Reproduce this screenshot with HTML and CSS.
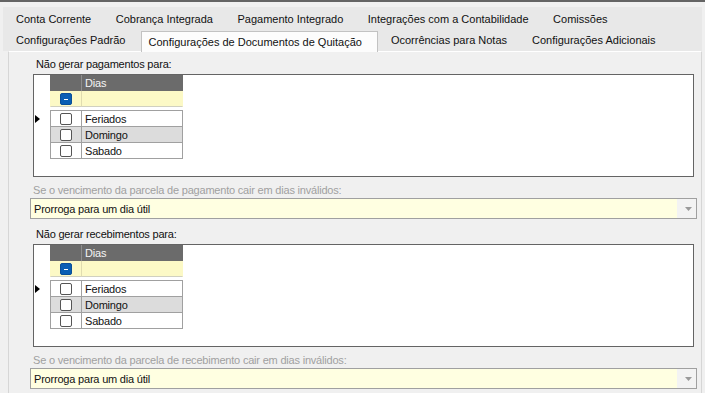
FILE: index.html
```html
<!DOCTYPE html>
<html lang="pt">
<head>
<meta charset="utf-8">
<link rel="stylesheet" href="styles.css">
</head>
<body>
<div class="window">
  <div class="tabs">
    <div class="tabrow r1">
      <span class="tab t-cc">Conta Corrente</span>
      <span class="tab">Cobrança Integrada</span>
      <span class="tab">Pagamento Integrado</span>
      <span class="tab">Integrações com a Contabilidade</span>
      <span class="tab">Comissões</span>
    </div>
    <div class="tabrow r2">
      <span class="tab t-cp">Configurações Padrão</span>
      <span class="tab sel">Configurações de Documentos de Quitação</span>
      <span class="tab t-oc">Ocorrências para Notas</span>
      <span class="tab t-ad">Configurações Adicionais</span>
    </div>
  </div>
  <div class="panel">
    <section class="sec s1">
      <div class="lbl">Não gerar pagamentos para:</div>
      <div class="grid">
        <div class="row head"><div class="ind"></div><div class="c1"></div><div class="c2">Dias</div></div>
        <div class="row filt"><div class="ind"></div><div class="c1"><span class="chk minus"></span></div><div class="c2"></div></div>
        <div class="rows">
          <div class="row"><div class="ind"><span class="arrow"></span></div><div class="c1"><span class="chk"></span></div><div class="c2">Feriados</div></div>
          <div class="row alt"><div class="ind"></div><div class="c1"><span class="chk"></span></div><div class="c2">Domingo</div></div>
          <div class="row"><div class="ind"></div><div class="c1"><span class="chk"></span></div><div class="c2">Sabado</div></div>
        </div>
      </div>
      <div class="lbl2">Se o vencimento da parcela de pagamento cair em dias inválidos:</div>
      <div class="combo"><div class="val">Prorroga para um dia útil</div><div class="btn"><svg width="7" height="4" viewBox="0 0 7 4"><path d="M0 0H7L3.5 4Z" fill="#9a9a9a"/></svg></div></div>
    </section>
    <section class="sec s2">
      <div class="lbl">Não gerar recebimentos para:</div>
      <div class="grid">
        <div class="row head"><div class="ind"></div><div class="c1"></div><div class="c2">Dias</div></div>
        <div class="row filt"><div class="ind"></div><div class="c1"><span class="chk minus"></span></div><div class="c2"></div></div>
        <div class="rows">
          <div class="row"><div class="ind"><span class="arrow"></span></div><div class="c1"><span class="chk"></span></div><div class="c2">Feriados</div></div>
          <div class="row alt"><div class="ind"></div><div class="c1"><span class="chk"></span></div><div class="c2">Domingo</div></div>
          <div class="row"><div class="ind"></div><div class="c1"><span class="chk"></span></div><div class="c2">Sabado</div></div>
        </div>
      </div>
      <div class="lbl2">Se o vencimento da parcela de recebimento cair em dias inválidos:</div>
      <div class="combo"><div class="val">Prorroga para um dia útil</div><div class="btn"><svg width="7" height="4" viewBox="0 0 7 4"><path d="M0 0H7L3.5 4Z" fill="#9a9a9a"/></svg></div></div>
    </section>
  </div>
</div>
</body>
</html>
```
FILE: styles.css
```css
* { box-sizing: border-box; }
html, body { margin: 0; padding: 0; }
body {
  width: 705px;
  height: 393px;
  overflow: hidden;
  background: #f0f0f0;
  font-family: "Liberation Sans", Arial, sans-serif;
  font-size: 11px;
  color: #111111;
}
.window {
  height: 393px;
  border-top: 2px solid #646464;
  display: flex;
  flex-direction: column;
}
.tabs {
  margin-top: 5px;
  margin-left: 3px;
  margin-right: 3px;
  background: #e8e8e8;
  display: flex;
  flex-direction: column;
}
.tabrow {
  display: flex;
  height: 22px;
  align-items: stretch;
}
.tab {
  display: flex;
  align-items: center;
  padding: 0 12.5px 0 12px;
  white-space: nowrap;
}
.r1 .tab { padding-top: 2px; }
.t-cc { margin-left: 1px; }
.t-cp { margin-left: 1px; padding-right: 12px; }
.tab.sel {
  margin-top: 2px;
  margin-bottom: -1px;
  padding: 0 15px 0 6px;
  margin-left: 4px;
  background: #fcfcfc;
  border: 1px solid #c2c2c2;
  border-bottom: none;
  position: relative;
  z-index: 1;
}
.t-oc { padding-left: 13px; padding-right: 11.5px; }
.t-ad { padding-left: 13.5px; }
.panel {
  flex: 1;
  margin-left: 8px;
  width: 694px;
  border-top: 1px solid #ffffff;
  border-left: 1px solid #d6d6d6;
  border-right: 1px solid #d6d6d6;
  background: #f0f0f0;
  display: flex;
  flex-direction: column;
  letter-spacing: -0.2px;
}
.sec { display: flex; flex-direction: column; }
.s1 { margin-top: 5px; }
.s2 { margin-top: 8px; }
.lbl {
  height: 17px;
  line-height: 15px;
  margin-left: 27px;
}
.grid {
  margin-left: 24px;
  width: 661px;
  height: 103px;
  border: 1px solid #646464;
  background: #ffffff;
  display: flex;
  flex-direction: column;
}
.row {
  display: flex;
  height: 16px;
}
.ind {
  width: 16px;
  flex: none;
  display: flex;
  align-items: center;
  justify-content: flex-start;
  padding-left: 1px;
}
.c1 {
  width: 32px;
  flex: none;
  border-left: 1px solid #a0a0a0;
  border-right: 1px solid #a0a0a0;
  display: flex;
  align-items: center;
  justify-content: center;
}
.c2 {
  width: 101px;
  flex: none;
  border-right: 1px solid #a0a0a0;
  padding-left: 3px;
  display: flex;
  align-items: center;
}
.head .c1 {
  background: #6b6b6b;
  border-left-color: #6b6b6b;
  border-right-color: #8e8e8e;
}
.head .c2 {
  background: #6b6b6b;
  border-right-color: #6b6b6b;
  color: #f4f4f4;
}
.filt .c1, .filt .c2 {
  background: #fcf9c6;
  border-bottom: 1px solid #d0d0c0;
  border-left-color: #fcf9c6;
  border-right-color: #fcf9c6;
}
.filt .c1 { border-right-color: #e0dcb0; }
.rows {
  margin-top: 3px;
  display: flex;
  flex-direction: column;
}
.rows .row { height: 16px; }
.rows .row:first-child .c1,
.rows .row:first-child .c2 { border-top: 1px solid #a0a0a0; height: 17px; }
.rows .row:first-child { height: 17px; }
.rows .c1, .rows .c2 { border-bottom: 1px solid #a0a0a0; }
.alt .c1, .alt .c2 { background: #dcdcdc; }
.chk {
  width: 12px;
  height: 12px;
  border: 1px solid #555555;
  border-radius: 2px;
  background: #ffffff;
  display: block;
}
.chk.minus {
  background: #0a5fb4;
  border-color: #0a4f98;
  position: relative;
}
.chk.minus::after {
  content: "";
  position: absolute;
  left: 3px;
  top: 5px;
  width: 4px;
  height: 1px;
  background: #ffffff;
}
.arrow {
  width: 0;
  height: 0;
  border-top: 4.5px solid transparent;
  border-bottom: 4.5px solid transparent;
  border-left: 5px solid #000000;
}
.lbl2 {
  margin-top: 6px;
  height: 15px;
  line-height: 15px;
  margin-left: 24px;
  color: #a0a0a0;
}
.combo {
  margin-left: 21px;
  width: 667px;
  height: 21px;
  border: 1px solid #a0a0a0;
  display: flex;
  background: #f3f3f3;
}
.val {
  flex: 1;
  background: #ffffe1;
  padding-left: 3px;
  display: flex;
  align-items: center;
}
.btn {
  width: 19px;
  flex: none;
  display: flex;
  align-items: center;
  justify-content: center;
  padding-left: 3px;
}
```
